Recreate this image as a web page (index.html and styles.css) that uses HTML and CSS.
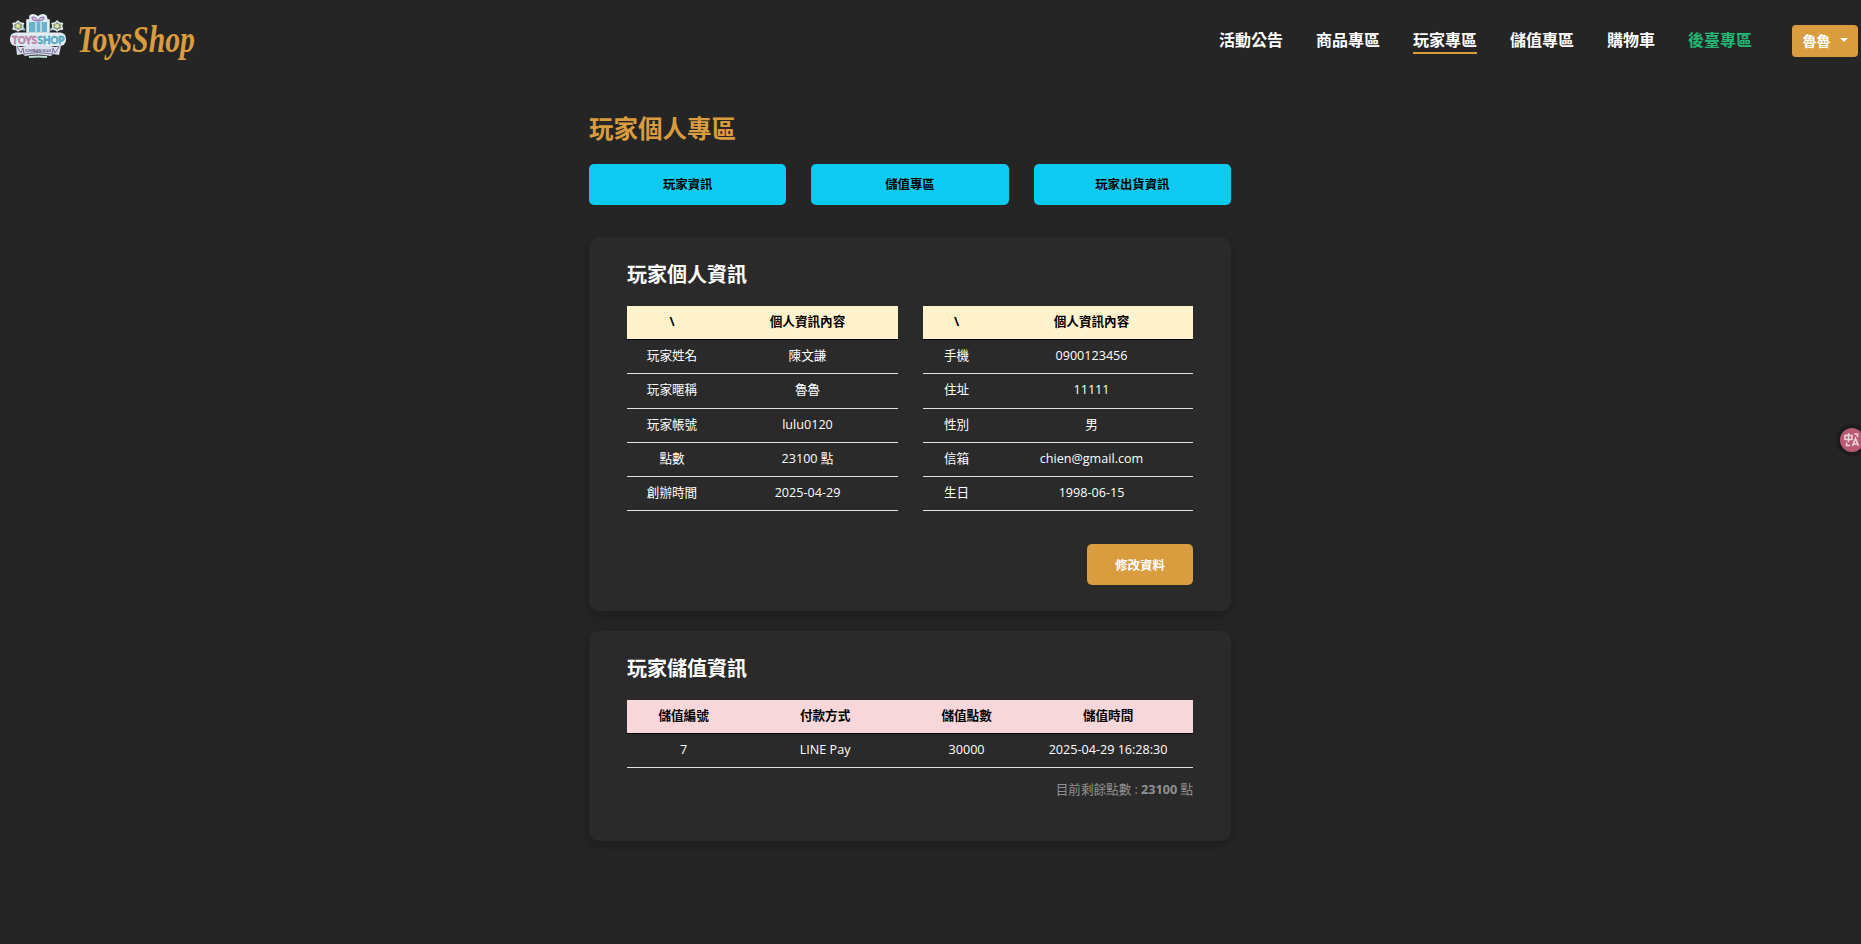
FILE: index.html
```
<!DOCTYPE html>
<html lang="zh-Hant">
<head>
<meta charset="utf-8">
<title>ToysShop</title>
<link rel="stylesheet" href="styles.css">
</head>
<body>
<header class="navbar">
  <a class="brand">
    <svg class="logo" width="58" height="44" viewBox="0 0 58 44">
      <g stroke="#e3eef3" stroke-width="1.4" stroke-linejoin="round" fill="#8b9f83">
        <path d="M9 7l2.500 2 3 .5-1 2.500 1 3-3 .5-2.500 1.500-2-1.500-3-.5 1-3-1-2.500 3-.5z"/>
        <path d="M48 7l2.500 2 3 .5-1 2.500 1 3-3 .5-2.500 1.500-2-1.500-3-.5 1-3-1-2.500 3-.5z"/>
      </g>
      <circle cx="9" cy="12" r="2" fill="#dfe5a0"/><circle cx="48" cy="12" r="2" fill="#dfe5a0"/>
      <path d="M21 2q4-3 8 1 4-4 8-1l1 4h2v12H18V6h3z" fill="#d9edf4" stroke="#e3eef3" stroke-width="1.500"/>
      <path d="M20 8h18v10H20z" fill="#6db1cc"/>
      <path d="M26 8h2v10h-2zM31 8h2v10h-2z" fill="#abdaea"/>
      <path d="M29 7q-7 0-6-4 4-1 6 4 2-5 6-4 1 4-6 4z" fill="#d6b4dc" stroke="#8779aa"/>
      <circle cx="15" cy="15.500" r="1.300" fill="#8db7ca"/><circle cx="42" cy="15.500" r="1.300" fill="#8db7ca"/>
      <rect x="1" y="18.500" width="56" height="13.500" rx="6" fill="#e2edf3"/>
      <path d="M7 32l5 1q17-5 34 0l6-1-2 9-6-1-2 2q-14-3-26 0l-2-2-6 1z" fill="#dcdeee"/>
      <path d="M8 33l4 6 2-5 1 6q14-3 28 0l1-6 2 5 4-6" fill="none" stroke="#74739c" stroke-width="1"/>
      <path d="M20 43q9-1 18 0" stroke="#bdded9" stroke-width="2"/>
      <text class="logo-word" x="3" y="29.500" textLength="25" lengthAdjust="spacingAndGlyphs" fill="#d995ba" stroke="#8b678d">TOYS</text>
      <text class="logo-word" x="28.500" y="29.500" textLength="27" lengthAdjust="spacingAndGlyphs" fill="#59bdd5" stroke="#447f9c">SHOP</text>
      <text class="logo-sub" x="16" y="38" textLength="26" lengthAdjust="spacingAndGlyphs" fill="#514a77">ICHIBAN KUJI</text>
    </svg>
    <svg class="wordmark" width="124" height="44" viewBox="0 0 124 44"><text class="wordmark-text" x="2" y="33" textLength="118" lengthAdjust="spacingAndGlyphs">ToysShop</text></svg>
  </a>
  <nav class="menu">
    <a class="link">活動公告</a>
    <a class="link">商品專區</a>
    <a class="link active">玩家專區</a>
    <a class="link">儲值專區</a>
    <a class="link">購物車</a>
    <a class="link admin">後臺專區</a>
    <button class="user">魯魯<span class="caret"></span></button>
  </nav>
</header>
<main class="page">
  <h1 class="title">玩家個人專區</h1>
  <div class="tabs">
    <button class="tab">玩家資訊</button>
    <button class="tab">儲值專區</button>
    <button class="tab">玩家出貨資訊</button>
  </div>
  <section class="card profile">
    <h2 class="heading">玩家個人資訊</h2>
    <div class="tables">
      <table class="table cream left">
        <thead><tr><th>\</th><th>個人資訊內容</th></tr></thead>
        <tbody>
          <tr><td>玩家姓名</td><td>陳文謙</td></tr>
          <tr><td>玩家暱稱</td><td>魯魯</td></tr>
          <tr><td>玩家帳號</td><td>lulu0120</td></tr>
          <tr><td>點數</td><td>23100 點</td></tr>
          <tr><td>創辦時間</td><td>2025-04-29</td></tr>
        </tbody>
      </table>
      <table class="table cream right">
        <thead><tr><th>\</th><th>個人資訊內容</th></tr></thead>
        <tbody>
          <tr><td>手機</td><td>0900123456</td></tr>
          <tr><td>住址</td><td>11111</td></tr>
          <tr><td>性別</td><td>男</td></tr>
          <tr><td>信箱</td><td>chien@gmail.com</td></tr>
          <tr><td>生日</td><td>1998-06-15</td></tr>
        </tbody>
      </table>
    </div>
    <div class="actions"><button class="edit">修改資料</button></div>
  </section>
  <section class="card topup">
    <h2 class="heading">玩家儲值資訊</h2>
    <table class="table pink">
      <thead><tr><th>儲值編號</th><th>付款方式</th><th>儲值點數</th><th>儲值時間</th></tr></thead>
      <tbody><tr><td>7</td><td>LINE Pay</td><td>30000</td><td>2025-04-29 16:28:30</td></tr></tbody>
    </table>
    <p class="balance">目前剩餘點數 : <b>23100</b> 點</p>
  </section>
</main>
<div class="translate">
  <svg width="24" height="24" viewBox="0 0 24 24" fill="none" stroke="#ecd3dc" stroke-width="1.600">
    <path d="M5 7.500h7v4H5zM8.500 5v9M14 6h3.500v3M6.500 14.500v3H10M12.500 18l3-7.500 3 7.500M13.500 16h4"/>
  </svg>
</div>
</body>
</html>
```
FILE: styles.css
```
* { box-sizing: border-box; }
body {
  margin: 0;
  height: 944px;
  overflow: hidden;
  background: #252525;
  color: #fff;
  font-family: "Open Sans", "Noto Sans CJK TC", sans-serif;
  font-size: 12.6px;
}
button { font-family: inherit; border: 0; padding: 0; }
.navbar {
  height: 82px;
  padding: 0 3px 0 9px;
  display: flex;
  justify-content: space-between;
}
.brand { display: flex; padding-top: 14px; gap: 8px; }
.logo { overflow: visible; }
.wordmark { margin-top: 5px; overflow: visible; }
.logo-word { font: 900 10.5px Lato, sans-serif; stroke-width: .4px; }
.logo-sub { font: bold 4.500px Lato, sans-serif; }
.wordmark-text {
  font: italic bold 37px "Liberation Serif", serif;
  fill: #d99c3f;
}
.menu { display: flex; align-items: flex-start; padding-top: 25px; }
.link {
  height: 29px;
  margin-right: 33px;
  font-size: 16px;
  line-height: 30px;
  font-weight: 700;
  white-space: nowrap;
}
.active { border-bottom: 2px solid #d99c3f; }
.admin { color: #22b573; margin-right: 40px; }
.user {
  width: 66px;
  height: 32px;
  display: flex;
  align-items: center;
  justify-content: center;
  gap: 9px;
  padding-bottom: 2px;
  border-radius: 4px;
  background: #d99c3f;
  color: #fff;
  font-size: 14px;
  font-weight: 700;
}
.caret { border: 4px solid transparent; border-top-color: #fff; border-bottom: 0; }
.page { width: 642px; margin-left: 589px; padding-top: 27px; }
.title { margin: 0 0 15px; font-size: 24.500px; line-height: 39px; padding-bottom: 1px; color: #d99c3f; }
.tabs { display: grid; grid-template-columns: repeat(3, 1fr); gap: 25px; margin-bottom: 32px; }
.tab {
  height: 41px;
  padding-bottom: 1px;
  border-radius: 5px;
  background: #0dcaf0;
  color: #000;
  font-size: 12.400px;
  font-weight: 700;
}
.card {
  padding: 20px 38px 0;
  border-radius: 10px;
  background: #2a2a2a;
  box-shadow: 0 4px 12px rgba(0, 0, 0, .25);
}
.profile { height: 374px; margin-bottom: 20px; }
.topup { height: 210px; }
.heading { margin: 0 0 14px; font-size: 20px; line-height: 35px; }
.tables { display: grid; grid-template-columns: 271px 270px; gap: 25px; }
.table { width: 100%; border-collapse: separate; border-spacing: 0; table-layout: fixed; text-align: center; }
.table th, .table td { padding: 0 0 1px; height: 34.300px; line-height: 20px; white-space: nowrap; }
.table th { height: 34px; color: #000; border-bottom: 1px solid #000; }
.table td { border-bottom: 1px solid #dee2e6; }
.cream th { background: #fff3cd; }
.pink th { background: #f8d7da; }
.pink th:nth-child(odd) { width: 20%; }
.pink th:nth-child(even) { width: 30%; }
.left th:first-child { width: 90px; }
.right th:first-child { width: 67px; }
.actions { display: flex; justify-content: flex-end; margin-top: 33px; }
.edit {
  width: 106px;
  height: 41px;
  border-radius: 5px;
  background: #d99c3f;
  color: #fff;
  font-size: 12.400px;
  font-weight: 700;
}
.balance { margin: 12px 0 0; line-height: 20px; text-align: right; color: #929292; }
.translate {
  position: absolute;
  right: -3px;
  top: 428px;
  width: 24px;
  height: 24px;
  border-radius: 50%;
  background: #b95a75;
  box-shadow: 0 0 0 4px #1c1c1c;
}
```
